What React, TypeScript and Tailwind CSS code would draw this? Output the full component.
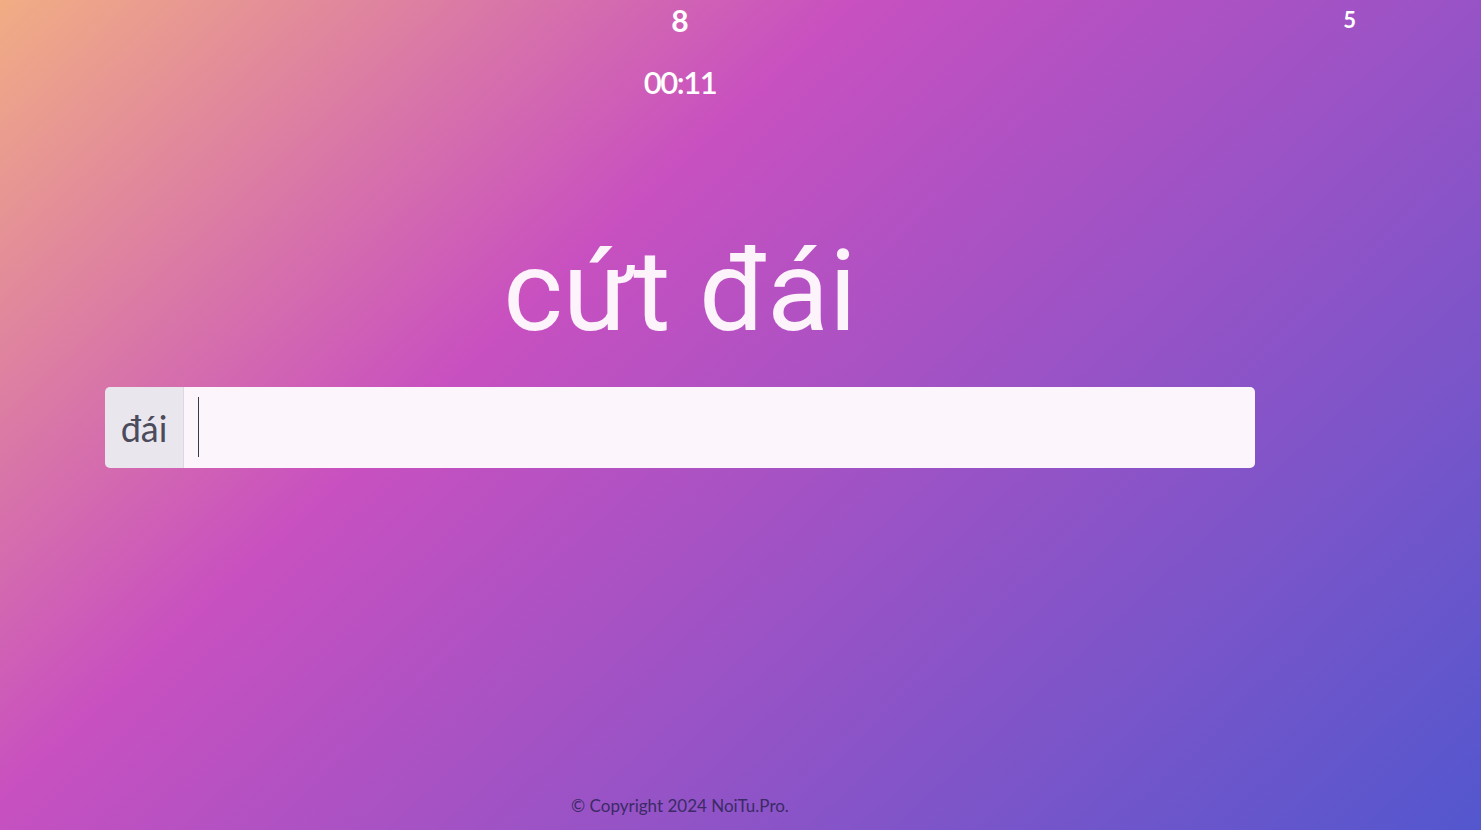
export default function App() {
  return (
    <div className="relative h-[830px] w-full overflow-hidden bg-[linear-gradient(317deg,#4158D0_-10%,#C850C0_64%,#FFCC70_112%)] font-['Lato',sans-serif]">
      <div className="flex h-full w-[1360px] flex-col items-center">
        <div className="relative w-full">
          <div className="pt-[2px] text-center text-[30px] leading-[36px] font-bold text-white">
            8
          </div>
          <div className="absolute top-[6px] right-[4px] text-[22px] leading-[28px] font-bold text-white">
            5
          </div>
        </div>
        <div className="mt-[24px] text-center text-[31px] leading-[40px] font-semibold tracking-[-1.5px] text-white">
          00:11
        </div>

        <div className="mt-[124px] font-['Roboto',sans-serif] text-[114px] leading-[130px] text-[#fdf3fb]">
          cứt đái
        </div>

        <div className="mt-[31px] flex h-[81px] w-[1150px] overflow-hidden rounded-[5px]">
          <div className="flex w-[79px] items-center justify-center border-r border-[#ddd6e6] bg-[#e9e6ee] text-[36px] text-[#4b4b5c]">
            đái
          </div>
          <div className="relative flex-1">
            <input
              autoFocus
              className="h-full w-full bg-[#fcf6fc] px-[14px] text-[36px] text-[#4b4b5c] caret-transparent outline-none"
            />
            <span className="pointer-events-none absolute top-[10px] left-[14px] h-[60px] w-px bg-[#3a3a48]" />
          </div>
        </div>

        <div className="mt-auto pb-[12px] text-[17px] text-[#3b2a66]">
          © Copyright 2024 NoiTu.Pro.
        </div>
      </div>
    </div>
  );
}
